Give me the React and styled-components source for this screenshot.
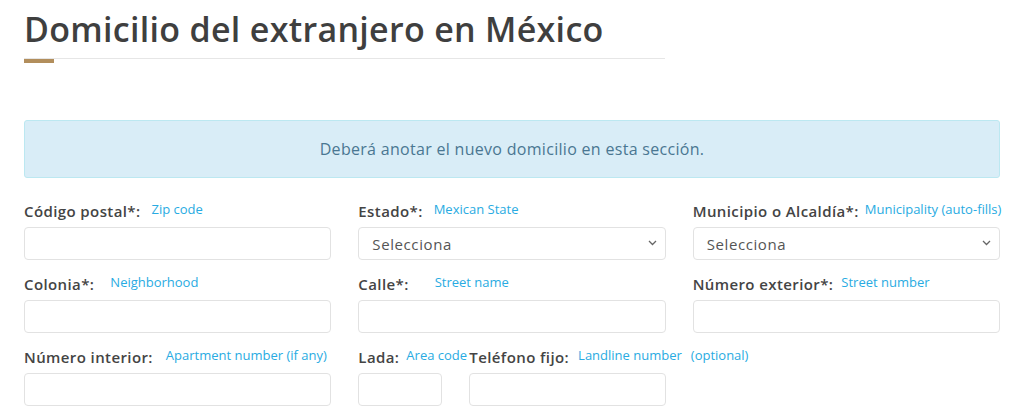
import React from "react";
import styled, { createGlobalStyle } from "styled-components";

const GlobalStyle = createGlobalStyle`
  body {
    margin: 0;
    background: #fff;
    font-family: "Open Sans", "Liberation Sans", sans-serif;
    color: #444;
  }
`;

const Page = styled.div`
  width: 976px;
  padding: 9px 0 0 24px;
`;

const Header = styled.div`
  width: 641px;
  border-bottom: 1px solid #e6e6e6;
  position: relative;
  padding-bottom: 9px;

  &::after {
    content: "";
    position: absolute;
    left: 0;
    bottom: -5px;
    width: 30px;
    height: 4px;
    background: #b28e5c;
  }
`;

const Title = styled.h1`
  margin: 0;
  font-family: "Open Sans", sans-serif;
  font-weight: 600;
  font-size: 34px;
  line-height: 40px;
  color: #3f3f3f;
  letter-spacing: 0.3px;
`;

const Alert = styled.div`
  margin-top: 61px;
  height: 56px;
  background: #d9edf7;
  border: 1px solid #bce8f1;
  border-radius: 3px;
  display: flex;
  align-items: center;
  justify-content: center;
  color: #4a7792;
  font-size: 16px;
  letter-spacing: 0.3px;
`;

const Grid = styled.div`
  margin-top: 23px;
  display: grid;
  grid-template-columns: repeat(3, 1fr);
  column-gap: 27px;
  row-gap: 14px;
`;

const Field = styled.div`
  display: flex;
  flex-direction: column;
  min-width: 0;
`;

const LabelRow = styled.div`
  display: flex;
  align-items: center;
  height: 20px;
  margin-bottom: 6px;
  white-space: nowrap;
`;

const Label = styled.label`
  font-weight: 600;
  font-size: 15px;
  color: #444;
  letter-spacing: 0.4px;
`;

const Hint = styled.span`
  font-size: 13px;
  color: #29abe2;
  margin-left: ${(p) => p.$gap || 11}px;
  margin-top: -4px;
`;

const Input = styled.input`
  box-sizing: border-box;
  width: 100%;
  height: 33px;
  border: 1px solid #e2e2e2;
  border-radius: 4px;
  background: #fff;
  outline: none;
`;

const SelectWrap = styled.div`
  position: relative;
  height: 33px;
`;

const Select = styled.select`
  appearance: none;
  box-sizing: border-box;
  width: 100%;
  height: 33px;
  border: 1px solid #e2e2e2;
  border-radius: 4px;
  background: #fff;
  padding: 0 13px;
  font-family: "Open Sans", sans-serif;
  font-size: 15px;
  letter-spacing: 0.6px;
  color: #555;
  outline: none;
`;

const Chevron = styled.svg`
  position: absolute;
  right: 9px;
  top: 13px;
  pointer-events: none;
`;

const PhoneGroup = styled.div`
  display: grid;
  grid-template-columns: 84px 1fr;
  column-gap: 27px;
`;

const Arrow = () => (
  <Chevron width="9" height="6" viewBox="0 0 9 6">
    <path d="M1 1l3.5 3.5L8 1" fill="none" stroke="#666" strokeWidth="1.3" />
  </Chevron>
);

const SelectField = () => (
  <SelectWrap>
    <Select defaultValue="">
      <option value="">Selecciona</option>
    </Select>
    <Arrow />
  </SelectWrap>
);

export default function App() {
  return (
    <Page>
      <GlobalStyle />
      <Header>
        <Title>Domicilio del extranjero en México</Title>
      </Header>

      <Alert>Deberá anotar el nuevo domicilio en esta sección.</Alert>

      <Grid>
        <Field>
          <LabelRow>
            <Label>Código postal*:</Label>
            <Hint>Zip code</Hint>
          </LabelRow>
          <Input />
        </Field>
        <Field>
          <LabelRow>
            <Label>Estado*:</Label>
            <Hint>Mexican State</Hint>
          </LabelRow>
          <SelectField />
        </Field>
        <Field>
          <LabelRow>
            <Label>Municipio o Alcaldía*:</Label>
            <Hint $gap={6}>Municipality (auto-fills)</Hint>
          </LabelRow>
          <SelectField />
        </Field>

        <Field>
          <LabelRow>
            <Label>Colonia*:</Label>
            <Hint $gap={16}>Neighborhood</Hint>
          </LabelRow>
          <Input />
        </Field>
        <Field>
          <LabelRow>
            <Label>Calle*:</Label>
            <Hint $gap={26}>Street name</Hint>
          </LabelRow>
          <Input />
        </Field>
        <Field>
          <LabelRow>
            <Label>Número exterior*:</Label>
            <Hint $gap={8}>Street number</Hint>
          </LabelRow>
          <Input />
        </Field>

        <Field>
          <LabelRow>
            <Label>Número interior:</Label>
            <Hint $gap={13}>Apartment number (if any)</Hint>
          </LabelRow>
          <Input />
        </Field>
        <PhoneGroup>
          <Field>
            <LabelRow>
              <Label>Lada:</Label>
              <Hint $gap={7}>Area code</Hint>
            </LabelRow>
            <Input />
          </Field>
          <Field>
            <LabelRow>
              <Label>Teléfono fijo:</Label>
              <Hint $gap={9}>Landline number</Hint>
              <Hint $gap={9}>(optional)</Hint>
            </LabelRow>
            <Input />
          </Field>
        </PhoneGroup>
      </Grid>
    </Page>
  );
}
